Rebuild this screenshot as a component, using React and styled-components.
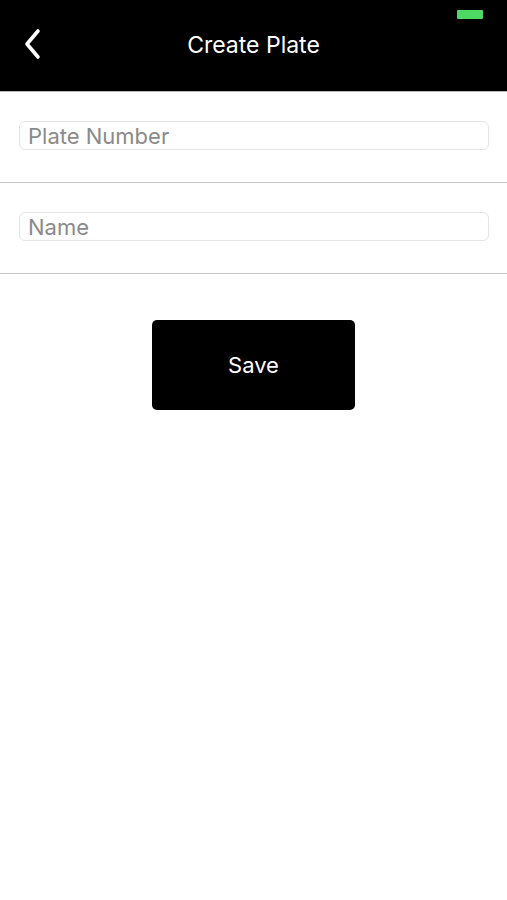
import React from "react";
import styled, { createGlobalStyle } from "styled-components";

const Global = createGlobalStyle`
  html, body { margin: 0; padding: 0; background: #fff; }
  body { font-family: Inter, "Liberation Sans", sans-serif; }
  * { box-sizing: border-box; }
`;

const Page = styled.div`
  width: 507px;
  min-height: 900px;
  background: #fff;
  display: flex;
  flex-direction: column;
`;

const Header = styled.header`
  position: relative;
  height: 92px;
  background: #000;
  border-bottom: 1px solid #b8b8b8;
  display: flex;
  align-items: flex-start;
  justify-content: center;
  padding-top: 29px;
`;

const Title = styled.h1`
  margin: 0;
  color: #fff;
  font-family: Inter, "Liberation Sans", sans-serif;
  font-weight: 400;
  font-size: 23px;
  line-height: 33px;
`;

const BackButton = styled.button`
  position: absolute;
  left: 20px;
  top: 28px;
  width: 24px;
  height: 32px;
  padding: 0;
  border: 0;
  background: transparent;
  display: flex;
  align-items: center;
  justify-content: center;
`;

const Battery = styled.div`
  position: absolute;
  left: 457px;
  top: 10px;
  width: 26px;
  height: 9px;
  background: #4cd964;
  border-radius: 1px;
`;

const FieldRow = styled.div`
  height: ${(p) => p.$h}px;
  padding: ${(p) => p.$pt}px 18px 0 19px;
  border-bottom: 1px solid #c9c9c9;
`;

const Input = styled.input`
  width: 100%;
  height: 29px;
  border: 1px solid #e4e4e4;
  border-radius: 6px;
  padding: 0 8px;
  font-family: Inter, "Liberation Sans", sans-serif;
  font-size: 22px;
  color: #222;
  outline: none;
  background: #fff;
  &::placeholder { color: #8a8a8a; }
`;

const ButtonWrap = styled.div`
  display: flex;
  justify-content: center;
  padding-top: 46px;
`;

const SaveButton = styled.button`
  width: 203px;
  height: 90px;
  background: #000;
  color: #fff;
  border: 0;
  border-radius: 5px;
  font-family: Inter, "Liberation Sans", sans-serif;
  font-size: 22px;
  font-weight: 400;
`;

export default function App() {
  return (
    <>
      <Global />
      <Page>
        <Header>
          <BackButton aria-label="Back">
            <svg width="20" height="32" viewBox="0 0 20 32" fill="none">
              <path d="M16 3 L5 16 L16 29" stroke="#fff" strokeWidth="3.6" strokeLinecap="round" strokeLinejoin="round" />
            </svg>
          </BackButton>
          <Title>Create Plate</Title>
          <Battery />
        </Header>
        <FieldRow $h={91} $pt={29}>
          <Input placeholder="Plate Number" />
        </FieldRow>
        <FieldRow $h={91} $pt={29}>
          <Input placeholder="Name" />
        </FieldRow>
        <ButtonWrap>
          <SaveButton>Save</SaveButton>
        </ButtonWrap>
      </Page>
    </>
  );
}
